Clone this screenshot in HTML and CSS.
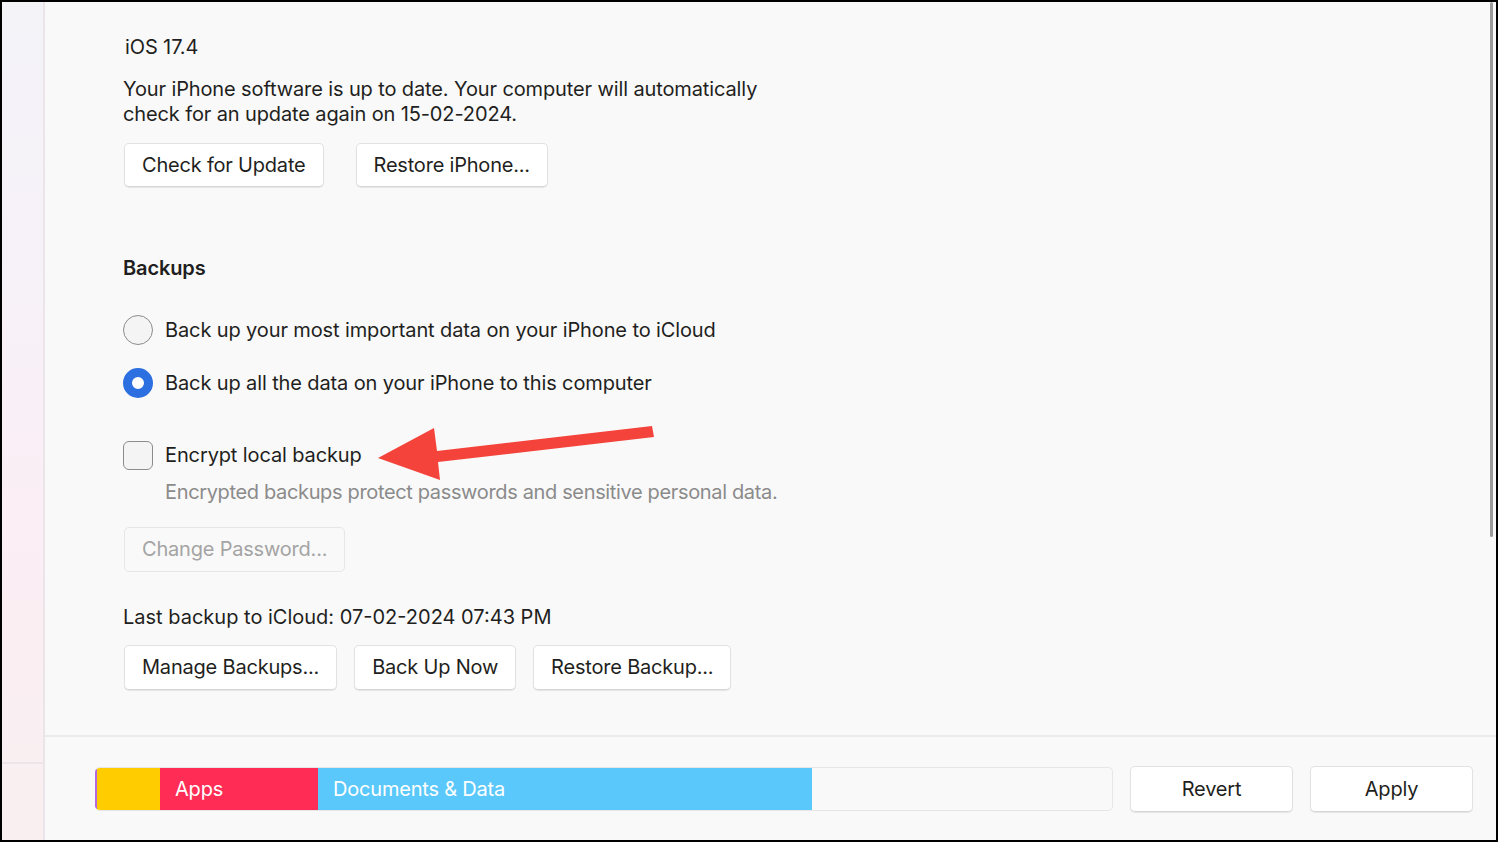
FILE: index.html
```html
<!DOCTYPE html>
<html lang="en">
<head>
<meta charset="utf-8">
<title>iPhone Backups</title>
<link rel="stylesheet" href="styles.css">
</head>
<body>
<div class="frame">
  <aside class="sidebar">
    <div class="sidebar-top"></div>
    <div class="sidebar-bottom"></div>
  </aside>
  <main class="main">
    <section class="content">
      <div class="version">iOS 17.4</div>
      <p class="para">Your iPhone software is up to date. Your computer will automatically<br>check for an update again on 15-02-2024.</p>
      <div class="btn-row btn-row-wide">
        <button class="btn">Check for Update</button>
        <button class="btn">Restore iPhone...</button>
      </div>

      <h2 class="heading">Backups</h2>

      <label class="option option-first">
        <span class="radio"></span>
        <span>Back up your most important data on your iPhone to iCloud</span>
      </label>
      <label class="option option-second">
        <span class="radio radio-on"></span>
        <span>Back up all the data on your iPhone to this computer</span>
      </label>

      <label class="option option-check">
        <span class="checkbox"></span>
        <span>Encrypt local backup</span>
      </label>
      <p class="desc">Encrypted backups protect passwords and sensitive personal data.</p>

      <div class="btn-row btn-row-pwd">
        <button class="btn btn-disabled">Change Password...</button>
      </div>

      <p class="last">Last backup to iCloud: 07-02-2024 07:43 PM</p>
      <div class="btn-row btn-row-tight">
        <button class="btn btn-tall">Manage Backups...</button>
        <button class="btn btn-tall">Back Up Now</button>
        <button class="btn btn-tall">Restore Backup...</button>
      </div>
    </section>
    <footer class="footer">
      <div class="storage">
        <span class="seg seg-purple"></span>
        <span class="seg seg-yellow"></span>
        <span class="seg seg-red">Apps</span>
        <span class="seg seg-blue">Documents &amp; Data</span>
      </div>
      <button class="btn btn-foot">Revert</button>
      <button class="btn btn-foot">Apply</button>
    </footer>
  </main>
  <div class="scrollbar"></div>
  <svg class="arrow" width="300" height="70" viewBox="0 0 300 70" aria-hidden="true">
    <polygon fill="#f4433a" points="0,33 56,3 59,26 274,1 276,12 60,37 62,55"/>
  </svg>
</div>
</body>
</html>
```

FILE: styles.css
```css
* { box-sizing: border-box; }
html, body { margin: 0; padding: 0; }
body {
  width: 1498px;
  height: 842px;
  overflow: hidden;
  background: #000;
  font-family: Inter, "Liberation Sans", sans-serif;
  color: #1f1f21;
}
.frame {
  position: relative;
  display: flex;
  width: 1498px;
  height: 842px;
  border: 2px solid #000;
  background: #f9f9f9;
}
.sidebar {
  width: 43px;
  flex: none;
  display: flex;
  flex-direction: column;
  background: linear-gradient(180deg, #f3f3f8 0%, #f7f1f8 35%, #fbeef5 60%, #f9eff0 100%);
  border-right: 2px solid #ebe5ea;
}
.sidebar-top { height: 762px; border-bottom: 2px solid #ebe4e8; }
.sidebar-bottom { flex: 1; }
.main {
  flex: 1;
  display: flex;
  flex-direction: column;
  min-width: 0;
}
.content {
  flex: 1;
  padding: 33px 0 0 78px;
  font-size: 20px;
  line-height: 25px;
  letter-spacing: -0.12px;
}
.version { padding-left: 2px; }
.para { margin: 17px 0 0; }
.btn-row { display: flex; }
.btn-row-wide { gap: 31px; margin-top: 16px; }
.btn-row-tight { gap: 16px; margin-top: 15px; }
.btn-row-pwd { margin-top: 22px; }
.btn {
  font: inherit;
  font-family: Inter, "Liberation Sans", sans-serif;
  font-size: 20px;
  letter-spacing: -0.2px;
  color: #1f1f21;
  background: #fff;
  border: 1px solid #e2e2e2;
  border-bottom-color: #d6d6d6;
  border-radius: 5px;
  box-shadow: 0 1px 1px rgba(0, 0, 0, 0.08);
  height: 44px;
  padding: 0 17px;
  margin-left: 1px;
}
.btn-tall { height: 45px; }
.btn-disabled {
  height: 45px;
  color: #a4a4a4;
  background: #f9f9f9;
  border-color: #e6e6e6;
  box-shadow: none;
}
.heading {
  margin: 69px 0 0;
  font-size: 20px;
  font-weight: 600;
  line-height: 25px;
}
.option {
  display: flex;
  align-items: center;
  gap: 12px;
  height: 30px;
}
.option-first { margin-top: 34px; }
.option-second { margin-top: 23px; }
.option-check { margin-top: 42px; }
.radio {
  width: 30px;
  height: 30px;
  border-radius: 50%;
  border: 1.5px solid #8c8c8c;
  background: #f4f4f4;
  flex: none;
}
.radio-on {
  border: 9px solid #2c6fe0;
  background: #fff;
}
.checkbox {
  width: 30px;
  height: 29px;
  border-radius: 6px;
  border: 1.5px solid #8c8c8c;
  background: #f4f4f4;
  flex: none;
}
.desc {
  margin: 10px 0 0 42px;
  color: #8b8b8b;
  letter-spacing: -0.35px;
}
.last { margin: 33px 0 0; letter-spacing: 0; }
.footer {
  height: 105px;
  flex: none;
  border-top: 2px solid #ebebeb;
  display: flex;
  align-items: flex-start;
  gap: 17px;
  padding: 29px 23px 0 50px;
}
.storage {
  flex: 1;
  height: 44px;
  display: flex;
  border: 1px solid #e6e6e6;
  border-left: none;
  border-radius: 5px;
  overflow: hidden;
  background: #f9f9f9;
  margin-top: 1px;
}
.seg {
  display: flex;
  align-items: center;
  color: #fff;
  font-size: 20px;
  letter-spacing: -0.2px;
  padding-left: 15px;
}
.seg-purple { width: 2px; padding: 0; background: #b36ae0; }
.seg-yellow { width: 63px; padding: 0; background: #ffcc00; }
.seg-red { width: 158px; background: #ff2d55; }
.seg-blue { width: 494px; background: #5ac8fa; }
.btn-foot {
  width: 163px;
  height: 46px;
  margin-left: 0;
}
.scrollbar {
  position: absolute;
  left: 1488px;
  top: 0;
  width: 3px;
  height: 535px;
  border-radius: 2px;
  background: #9b9b9b;
}
.arrow {
  position: absolute;
  left: 376px;
  top: 423px;
}
```
